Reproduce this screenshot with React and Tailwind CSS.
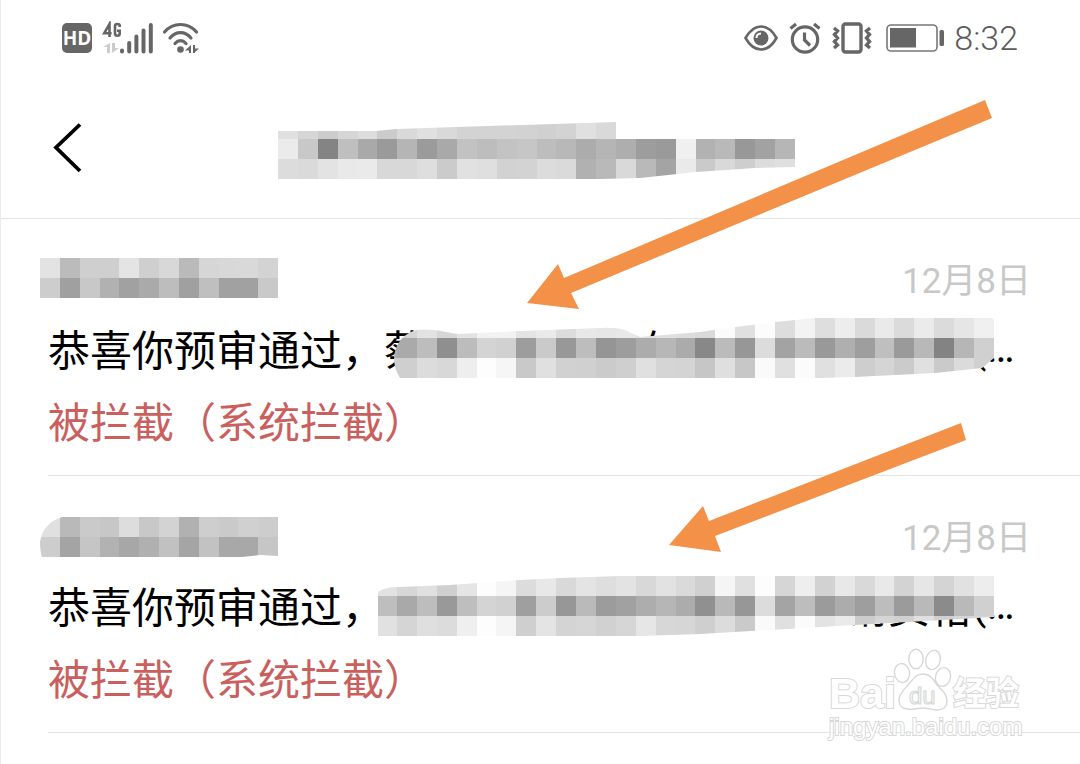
import React from "react";

const CELL = 20;

const TITLE_ROWS = [
  "e0 d6 cc d6 dd cb d9 e0 d9 d3 d3 d3 d2 d0 d3 e0 d9 fb fb fb fb fb fb fb fb fb",
  "eb c8 84 bf a9 9a b5 9b a9 c2 bd c3 c6 bd b8 ac b5 ae 9d 9a f0 b2 b9 98 a2 b6",
  "dc da e3 e9 ea d8 d8 de cb e1 df d2 d3 dc da b1 b9 d9 b9 a4 ea ca d9 ce dc e0",
];

const MESSAGES = [
  {
    id: "first",
    date: "12月8日",
    name: {
      y: 0,
      rows: [
        "e3 bb cf cf e4 cf d8 ba d6 d8 d9 d3",
        "cd a0 c8 b1 a1 aa bd a0 bf a1 a1 c9",
      ],
      clip: "M0 0H238V40H0Z",
    },
    text: (
      <>
        恭喜你预审通过，蔡
        <span className="inline-block w-[210px]" />在<span className="inline-block w-[294px]" />
      </>
    ),
    cover: {
      y: 0,
      rows: [
        "d5 d5 e2 d6 e2 f2 f2 e4 ea dc e8 e6 e8 e0 e0 dd d9 fb e0 fc dd f3 de ed da ea db eb db e6 f0",
        "b0 aa bd 8f bc d4 d1 9d ca 98 bd 95 9d ac b7 ab 88 bb 97 dc a3 bb 99 af 9e bf 9a b8 83 b6 d0",
        "cf cf dc d8 ee fd f6 c9 e0 d1 d0 cb cf e0 d5 d4 c6 df c7 fa e0 fb e0 eb ce d5 cb e0 ca db d0",
      ],
      clip: "M17 40C18 28 24 16 40 12C56 10 66 14 82 16L143 13L223 10Q246 9 254 15L263 19L323 14L358 9L398 4L438 0H614Q617 0 617 3V40L605 50L558 55L478 59L443 60H23Q17 51 17 40Z",
    },
    status: "被拦截（系统拦截）",
  },
  {
    id: "second",
    date: "12月8日",
    name: {
      y: 2,
      rows: [
        "e0 b9 ca c7 dd c8 d3 b1 ce ca d0 cd",
        "cd a4 c5 b2 a7 b0 c1 a5 c2 a8 a8 c6",
      ],
      clip: "M22 0H238V39L220 38L202 40H2Q0 34 0 25Q3 6 22 0Z",
    },
    text: (
      <>
        恭喜你预审通过，
        <span className="inline-block w-[462px]" />请资格
      </>
    ),
    cover: {
      y: 1,
      rows: [
        "e2 d7 e0 d0 e5 fd f5 dc e8 d9 e4 de e3 d8 e2 da d0 f5 e0 fd d6 ee d2 e8 d9 e9 d3 e6 d4 e1 ed",
        "be a9 bd 99 be d4 d1 9f cc 97 ba 9c a1 ad b6 ac 90 b9 97 dc a4 bd 9b ac 9e bd 9b b9 8b b9 d0",
        "e1 d5 df dc ef fd f5 cf e4 d4 d6 d1 d6 e6 d7 d6 cf dc ca fa e0 fb e3 ea cc d5 d0 e0 d0 d6 d6",
      ],
      clip: "M1 16Q8 11 21 11L73 9L143 4L183 2L243 0H617V41L583 43L478 49L393 54L323 58L263 60H1Z",
    },
    status: "被拦截（系统拦截）",
  },
];

function Mosaic({ id, rows, width, clip, y = 0, className, label }) {
  const count = rows[0].split(" ").length;
  const edge = (i) => Math.round((i * width) / count);
  return (
    <svg className={className} width={width} height={rows.length * CELL + y} role="img" aria-label={label}>
      <clipPath id={id}>
        <path d={clip} />
      </clipPath>
      <g transform={`translate(0 ${y})`}>
        <g clipPath={`url(#${id})`} shapeRendering="crispEdges">
          {rows.map((row, r) =>
            row.split(" ").map((v, c) => (
              <rect
                key={`${r}-${c}`}
                x={edge(c)}
                y={r * CELL}
                width={edge(c + 1) - edge(c)}
                height={CELL}
                fill={`#${v}${v}${v}`}
              />
            ))
          )}
        </g>
      </g>
    </svg>
  );
}

function HdIcon() {
  return (
    <svg width="30" height="30" viewBox="0 0 30 30" role="img" aria-label="HD">
      <rect width="30" height="30" rx="5" fill="#666" />
      <text x="15" y="22" textAnchor="middle" fontFamily="Open Sans, sans-serif" fontWeight="700" fontSize="19" fill="#fff">
        HD
      </text>
    </svg>
  );
}

function SignalIcon() {
  return (
    <svg width="52" height="34" viewBox="0 0 52 34" role="img" aria-label="4G">
      <g fill="none" stroke="#666" strokeWidth="2.6">
        <path d="M7.5 16V3L2.2 12.2H9.6" />
        <path d="M17.7 6V4.6Q17.7 3 15.4 3Q13 3 13 5V12.5Q13 14.7 15.4 14.7Q17.7 14.7 17.7 12.5V9.7H15" />
      </g>
      <path d="M8 22V32H5V26H1ZM10 22H13V27H17L10 32Z" fill="#ccc" />
      <g stroke="#666" strokeWidth="4" strokeLinecap="round">
        <path d="M20 29.5V30.5M27.2 22V30.5M34.4 15.5V30.5M41.5 9.5V30.5M48.8 4V30.5" />
      </g>
    </svg>
  );
}

function WifiIcon() {
  return (
    <svg width="38" height="34" viewBox="0 0 38 34" role="img" aria-label="Wi-Fi">
      <g fill="none" stroke="#666" strokeWidth="3.2" strokeLinecap="round">
        <path d="M2.5 11Q9 3.5 18.5 3.5T34.5 11" />
        <path d="M8 17Q12.500 11.700 18.500 11.700T29 17" />
        <path d="M13 22.500Q15.500 19.700 18.500 19.700T24 22.500" />
      </g>
      <circle cx="18.500" cy="28.500" r="3.300" fill="#666" />
      <path d="M29 24V32H27V29.500H23ZM31 24H33V27.500H37L33 31V32H31Z" fill="#666" />
    </svg>
  );
}

function EyeIcon() {
  return (
    <svg width="34" height="26" viewBox="0 0 34 26" role="img" aria-label="护眼">
      <path d="M1.500 13Q8 1.500 17 1.500T32.500 13Q26 24.500 17 24.500T1.500 13Z" fill="none" stroke="#666" strokeWidth="2.600" />
      <circle cx="17" cy="13" r="7.500" fill="#666" />
      <path d="M12.500 13Q12.500 8.700 17 8.500" fill="none" stroke="#fff" strokeWidth="2" />
    </svg>
  );
}

function AlarmIcon() {
  return (
    <svg width="32" height="32" viewBox="0 0 32 32" role="img" aria-label="闹钟">
      <g fill="none" stroke="#666" strokeWidth="3.200">
        <circle cx="16" cy="17.500" r="12.700" />
        <path d="M15.500 10.500V18L21 23.500" />
        <path d="M1.500 6.500L7 2M30.500 6.500L25 2" />
      </g>
    </svg>
  );
}

function VibrateIcon() {
  return (
    <svg width="40" height="32" viewBox="0 0 40 32" role="img" aria-label="振动">
      <rect x="11" y="2" width="18" height="28" rx="2.500" fill="none" stroke="#666" strokeWidth="3.400" />
      <path
        d="M2 6L5.500 9L2.500 12.500L5.500 16L2.500 19.500L5.500 23L2 26M38 6L34.500 9L37.500 12.500L34.500 16L37.500 19.500L34.500 23L38 26"
        fill="none"
        stroke="#666"
        strokeWidth="3.400"
      />
    </svg>
  );
}

function BatteryIcon() {
  return (
    <svg width="58" height="28" viewBox="0 0 58 28" role="img" aria-label="电量">
      <rect x="1" y="1" width="50" height="26" rx="4" fill="none" stroke="#777" strokeWidth="1.600" />
      <rect x="4" y="4" width="26" height="19.500" fill="#666" />
      <rect x="53.500" y="6" width="4.500" height="16" rx="1.500" fill="#666" />
    </svg>
  );
}

function StatusBar() {
  return (
    <div className="flex h-[76px] items-center justify-between pr-[62px] pl-[61px] text-[#5c5c5c]">
      <div className="flex items-center gap-2">
        <HdIcon />
        <div className="flex items-center gap-2 pl-[2px]">
          <SignalIcon />
          <WifiIcon />
        </div>
      </div>
      <div className="flex items-center gap-[11px]">
        <EyeIcon />
        <AlarmIcon />
        <VibrateIcon />
        <div className="flex items-center gap-[10px] pl-[3px]">
          <BatteryIcon />
          <span className="font-['Roboto',sans-serif] text-[34px] leading-[40px] font-light">8:32</span>
        </div>
      </div>
    </div>
  );
}

function TitleBar() {
  return (
    <header className="flex h-[143px] items-start border-b border-[#e4e4e4] pl-[48px]">
      <button type="button" aria-label="返回" className="mt-[42px] p-1">
        <svg width="30" height="52" viewBox="0 0 30 52" fill="none" stroke="#000" strokeWidth="3.800">
          <path d="M27 2.500L3 25.500L27 49" />
        </svg>
      </button>
      <h1 className="flex flex-1 justify-center pt-[43px] pr-[94px]">
        <Mosaic
          id="title-clip"
          rows={TITLE_ROWS}
          width={517}
          clip="M0 12H98L118 10L338 3V20H517V48L477 49L418 53L362 59L322 60H0Z"
          label="标题已打码"
        />
      </h1>
    </header>
  );
}

function MessageItem({ message }) {
  const { id, date, name, text, cover, status } = message;
  return (
    <li className="relative pt-[39px]">
      <div className="flex h-[54px] items-start justify-between pr-[49px] pl-[39px]">
        <Mosaic id={`${id}-name`} {...name} width={238} label="发件人已打码" />
        <time className="font-['Roboto','Noto_Sans_CJK_SC',sans-serif] text-[35px] leading-[48px] text-[#c8c8c8]">{date}</time>
      </div>
      <div className="ml-[47px] border-b border-[#e4e4e4] pb-[19px] text-[42px] leading-[72px]">
        <p className="flex h-[72px] whitespace-nowrap text-black">
          <span>{text}</span>
          <span className="font-['Roboto',sans-serif]">(…</span>
        </p>
        <p className="h-[72px] text-[#c9605e]">{status}</p>
      </div>
      <Mosaic id={`${id}-cover`} {...cover} width={617} className="absolute top-[99px] left-[376px]" label="内容已打码" />
    </li>
  );
}

function Watermark() {
  return (
    <svg className="absolute top-[644px] right-[54px]" width="200" height="100" viewBox="0 0 200 100" role="img" aria-label="Baidu 经验">
      <g fill="#fff" stroke="#d8d8d8" strokeWidth="1.400">
        <g fontFamily="Liberation Sans, sans-serif" fontWeight="700" paintOrder="stroke" strokeWidth="2">
          <text x="3" y="64" fontSize="43">Bai</text>
          <text x="127" y="61" fontSize="33" fontFamily="Noto Sans CJK SC, sans-serif">经验</text>
          <text x="3" y="91" fontSize="24" fontWeight="400">jingyan.baidu.com</text>
        </g>
        <ellipse cx="76" cy="29" rx="7.500" ry="9.500" transform="rotate(-10 76 29)" />
        <ellipse cx="90" cy="15" rx="7.200" ry="9.800" />
        <ellipse cx="107" cy="16" rx="7.200" ry="9.800" transform="rotate(15 107 16)" />
        <ellipse cx="117" cy="33" rx="7.500" ry="9.500" transform="rotate(15 117 33)" />
        <path d="M97 30C104 30 107 35 111 41C116 46 121 50 121 57C121 63 117 66 111 66C105 66 102 64 97 64C91 64 87 66 82 65C76 65 73 61 73 56C73 49 79 45 83 40C87 35 90 30 97 30Z" />
        <text x="83" y="60" fontSize="24" fontFamily="Liberation Sans, sans-serif" strokeWidth="1.200">du</text>
      </g>
    </svg>
  );
}

function Arrow({ className, width, height, d }) {
  return (
    <svg className={className} width={width} height={height} aria-hidden="true">
      <path d={d} fill="#f39149" />
    </svg>
  );
}

export default function App() {
  return (
    <main className="relative min-h-screen overflow-hidden border-l border-[#ececec] bg-white font-['Noto_Sans_CJK_SC',sans-serif]">
      <StatusBar />
      <TitleBar />
      <ul>
        {MESSAGES.map((message) => (
          <MessageItem key={message.id} message={message} />
        ))}
      </ul>
      <Arrow
        className="pointer-events-none absolute top-[100px] left-[526px]"
        width={466}
        height={210}
        d="M0 203L31 164L37 178L458 0L465 18L44 193L52 209Z"
      />
      <Arrow
        className="pointer-events-none absolute top-[423px] left-[668px]"
        width={298}
        height={130}
        d="M0 122L34 83L40 98L292 0L297 17L46 113L52 129Z"
      />
      <Watermark />
    </main>
  );
}
